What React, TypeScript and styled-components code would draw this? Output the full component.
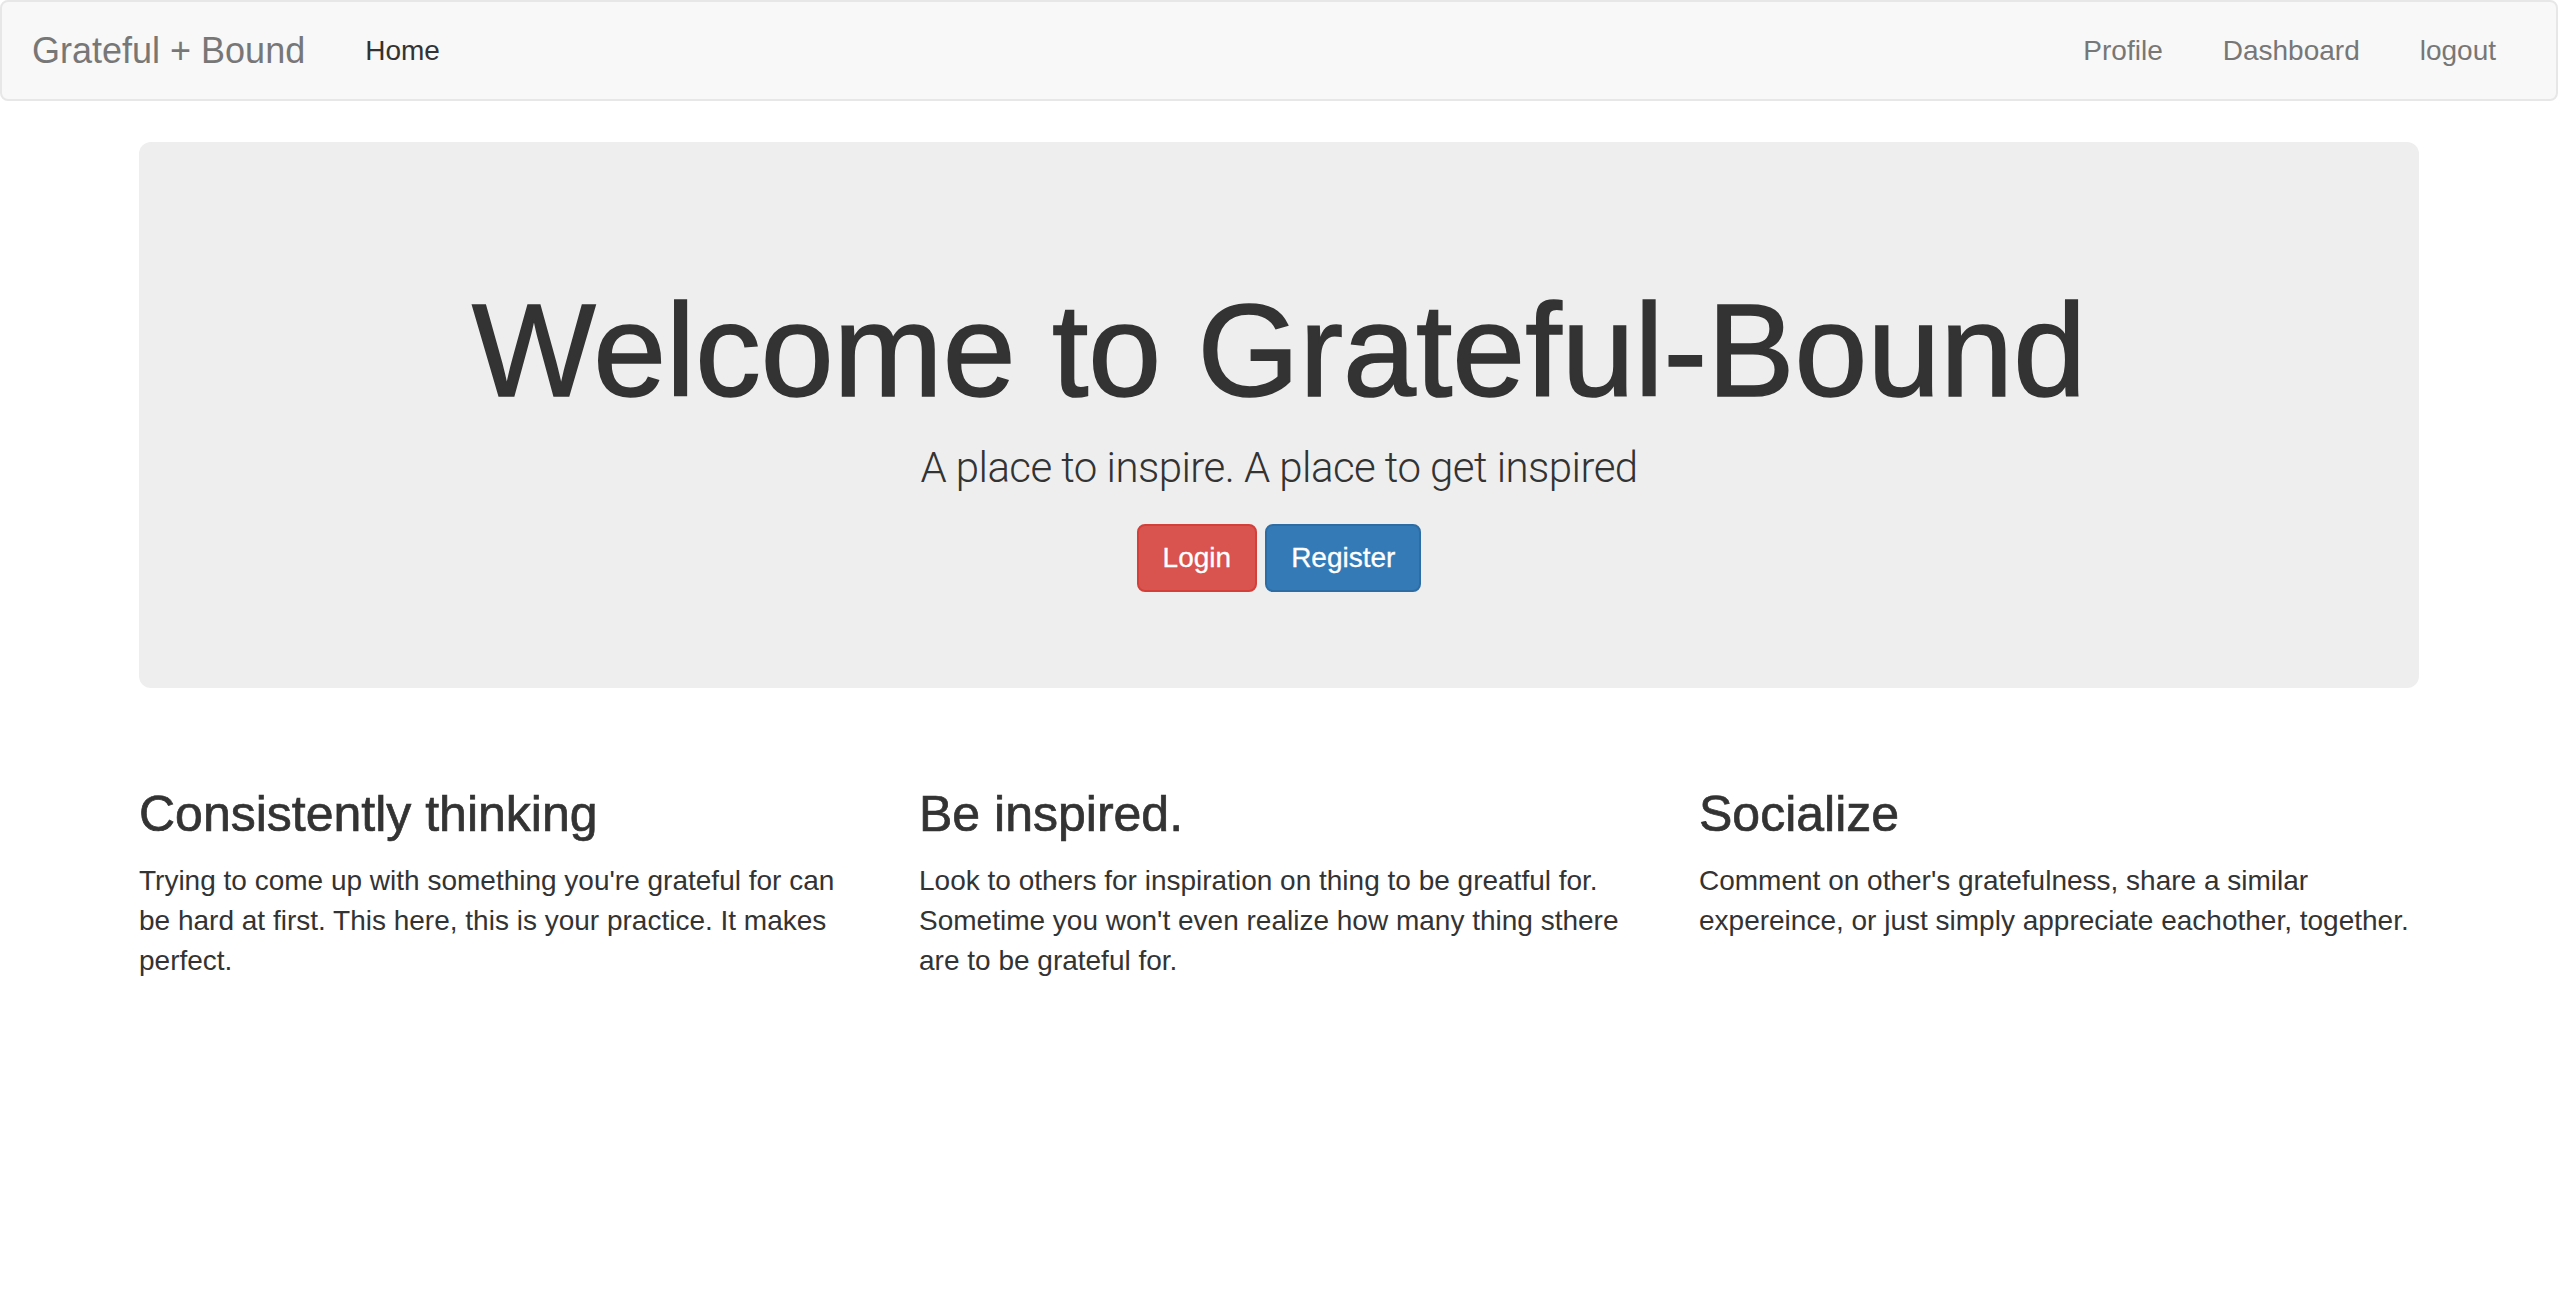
import React from "react";
import styled, { createGlobalStyle, css } from "styled-components";

const GlobalStyle = createGlobalStyle`
  html, body {
    margin: 0;
    padding: 0;
    background: #ffffff;
  }
  body {
    font-family: "Liberation Sans", Helvetica, Arial, sans-serif;
    font-size: 28px;
    line-height: 40px;
    color: #333333;
  }
  * { box-sizing: border-box; }
`;

const Navbar = styled.nav`
  height: 101px;
  border: 2px solid #e7e7e7;
  border-radius: 8px;
  background: #f8f8f8;
  margin-bottom: 41px;
  display: flex;
  align-items: center;
  padding: 0 30px 0 0;
`;

const Brand = styled.a`
  font-size: 36px;
  line-height: 40px;
  color: #777777;
  padding: 0 30px;
  text-decoration: none;
`;

const NavList = styled.ul<{ $right?: boolean }>`
  list-style: none;
  margin: 0;
  padding: 0;
  display: flex;
  ${(p) =>
    p.$right &&
    css`
      margin-left: auto;
    `}
`;

const NavLink = styled.a<{ $active?: boolean }>`
  display: block;
  padding: 0 30px;
  font-size: 28px;
  line-height: 40px;
  color: ${(p) => (p.$active ? "#333333" : "#777777")};
  text-decoration: none;
`;

const Container = styled.main`
  width: 2340px;
  margin: 0 auto;
  padding: 0 30px;
`;

const Jumbotron = styled.section`
  background: #eeeeee;
  border-radius: 12px;
  padding: 96px 120px;
  text-align: center;
  margin-bottom: 60px;
`;

const Title = styled.h1`
  margin: 44px 0 18px;
  font-size: 131px;
  line-height: 138px;
  font-weight: 400;
  color: #333333;
  -webkit-text-stroke: 1.6px #333333;
`;

const Lead = styled.p`
  margin: 0 0 26px;
  font-family: Roboto, "Liberation Sans", sans-serif;
  font-weight: 300;
  font-size: 42px;
  line-height: 60px;
  letter-spacing: -0.55px;
  color: #333333;
`;

const ButtonRow = styled.div`
  display: flex;
  justify-content: center;
  gap: 8px;
`;

const Button = styled.a<{ $variant: "danger" | "primary" }>`
  display: inline-block;
  padding: 12px 24px;
  font-size: 28px;
  line-height: 40px;
  color: #ffffff;
  border-radius: 8px;
  border: 2px solid;
  text-decoration: none;
  -webkit-text-stroke: 0.3px #ffffff;
  ${(p) =>
    p.$variant === "danger"
      ? css`
          background: #d9534f;
          border-color: #d43f3a;
        `
      : css`
          background: #337ab7;
          border-color: #2e6da4;
        `}
`;

const Features = styled.div`
  display: grid;
  grid-template-columns: repeat(3, 1fr);
  column-gap: 60px;
`;

const Feature = styled.div``;

const FeatureTitle = styled.h3`
  margin: 40px 0 20px;
  font-size: 50px;
  line-height: 53px;
  font-weight: 400;
  color: #333333;
  -webkit-text-stroke: 0.7px #333333;
`;

const FeatureText = styled.p`
  margin: 0 0 20px;
  font-size: 28px;
  line-height: 40px;
`;

const features = [
  {
    title: "Consistently thinking",
    text: "Trying to come up with something you're grateful for can be hard at first. This here, this is your practice. It makes perfect.",
  },
  {
    title: "Be inspired.",
    text: "Look to others for inspiration on thing to be greatful for. Sometime you won't even realize how many thing sthere are to be grateful for.",
  },
  {
    title: "Socialize",
    text: "Comment on other's gratefulness, share a similar expereince, or just simply appreciate eachother, together.",
  },
];

export default function App() {
  return (
    <>
      <GlobalStyle />
      <Navbar>
        <Brand href="#">Grateful + Bound</Brand>
        <NavList>
          <li>
            <NavLink href="#" $active>
              Home
            </NavLink>
          </li>
        </NavList>
        <NavList $right>
          <li>
            <NavLink href="#">Profile</NavLink>
          </li>
          <li>
            <NavLink href="#">Dashboard</NavLink>
          </li>
          <li>
            <NavLink href="#">logout</NavLink>
          </li>
        </NavList>
      </Navbar>
      <Container>
        <Jumbotron>
          <Title>Welcome to Grateful-Bound</Title>
          <Lead>A place to inspire. A place to get inspired</Lead>
          <ButtonRow>
            <Button href="#" $variant="danger">
              Login
            </Button>
            <Button href="#" $variant="primary">
              Register
            </Button>
          </ButtonRow>
        </Jumbotron>
        <Features>
          {features.map((f) => (
            <Feature key={f.title}>
              <FeatureTitle>{f.title}</FeatureTitle>
              <FeatureText>{f.text}</FeatureText>
            </Feature>
          ))}
        </Features>
      </Container>
    </>
  );
}
